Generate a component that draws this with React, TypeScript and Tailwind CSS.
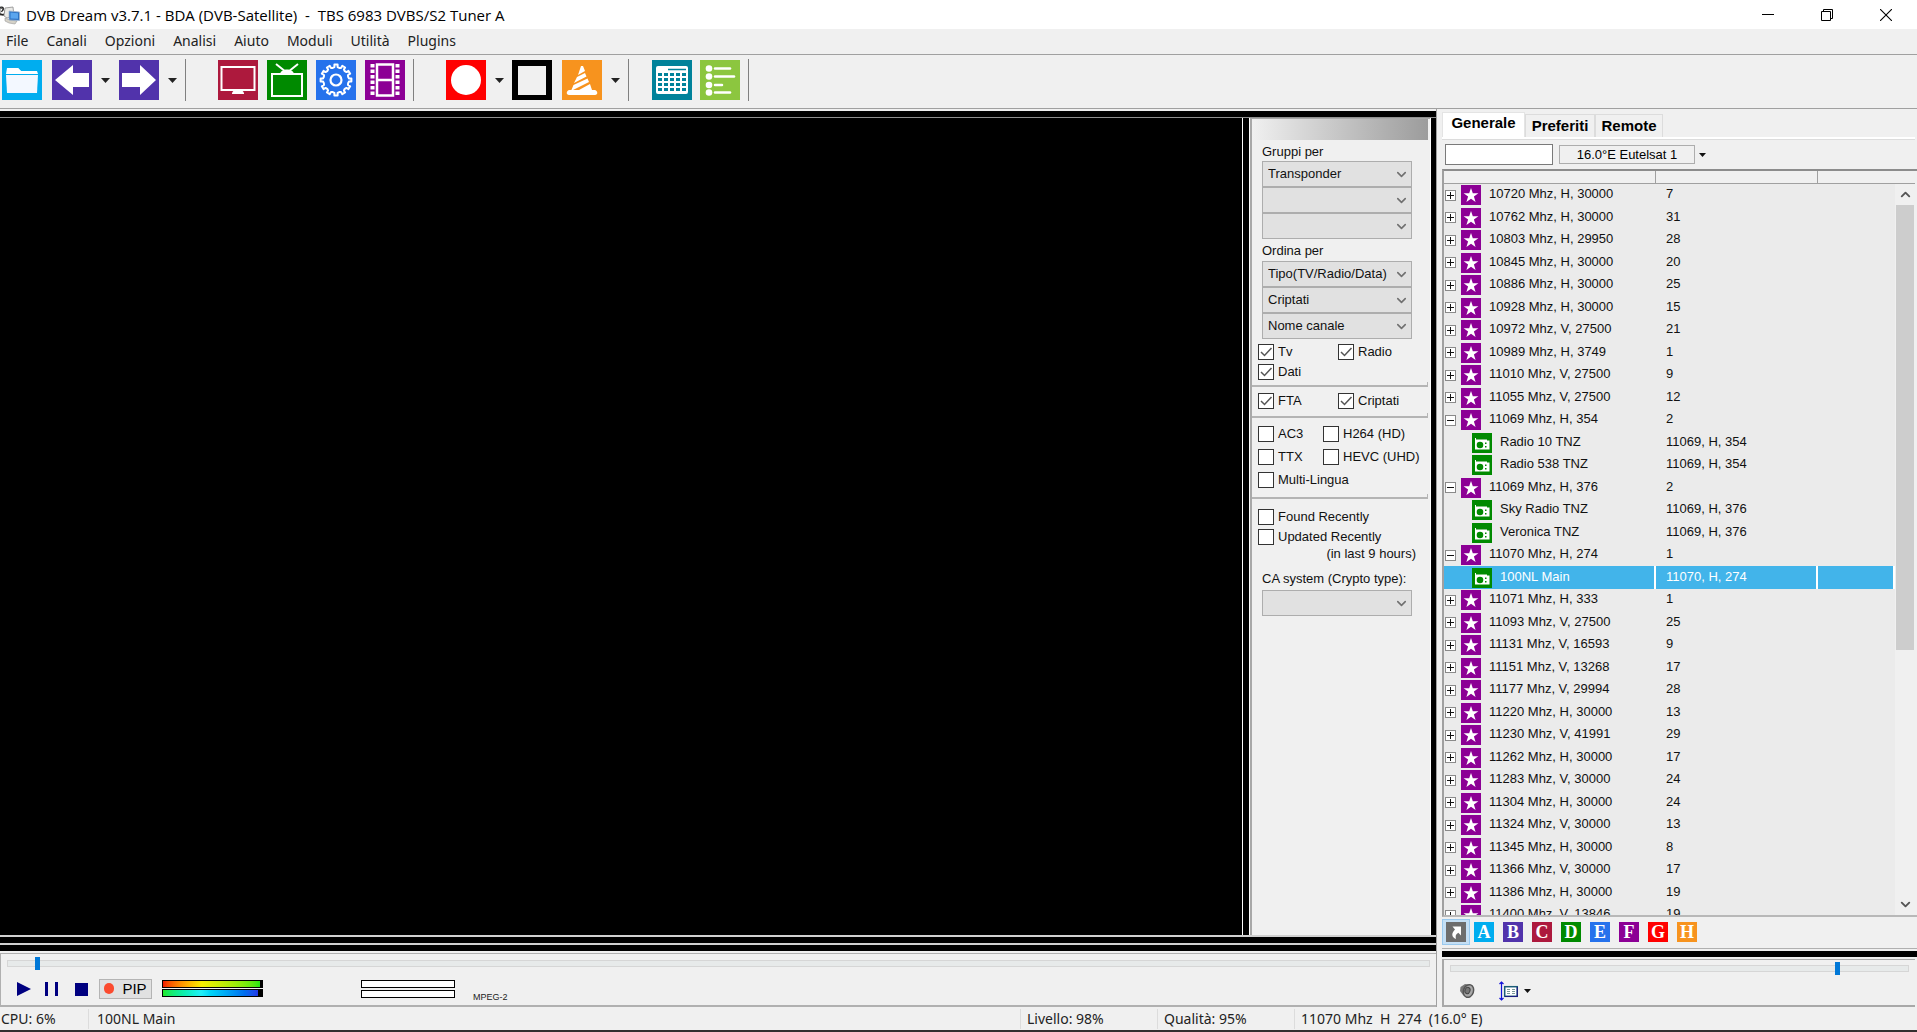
import React from 'react';
import { ChevronDown, ChevronUp } from 'lucide-react';

const sans = "font-['Liberation_Sans',Arial,sans-serif]";

function Caret({ className = '' }: { className?: string }) {
  return (
    <svg viewBox="0 0 9 5" className={'h-[5px] w-[9px] ' + className} aria-hidden="true">
      <path d="M0 0h9L4.500 5z" fill="#222" />
    </svg>
  );
}

function AppIcon() {
  return (
    <svg viewBox="0 0 20 20" className="h-5 w-5" aria-hidden="true">
      <path d="M0 3l3 1 2 3-2 3H0z" fill="#fff" stroke="#444" strokeWidth=".8" />
      <path d="M0 2.500c2-1 4 0 3 2L1.500 7M0 9l4 1" fill="none" stroke="#222" strokeWidth="1.300" />
      <path d="M5 3l8-1 1 9-7 2-3-2z" fill="#e9e9e6" stroke="#8d8d8d" strokeWidth=".8" />
      <path d="M5 13l5 2 7 1-2 3-6-1-4-2z" fill="#d5d2c8" stroke="#999" strokeWidth=".6" />
      <path d="M9 6l10.500 1v8.500L9 15z" fill="#2b72c4" stroke="#9fb4cb" strokeWidth=".8" />
      <path d="M10.500 7.500l7.500.8v5.500l-7.500-.3z" fill="#5aa5ee" />
    </svg>
  );
}

type ToolName = 'folder' | 'back' | 'forward' | 'monitor' | 'tv' | 'gear' | 'film' | 'record' | 'stop' | 'cone' | 'calendar' | 'list';

function gearPath() {
  const teeth = 12;
  let d = '';
  for (let i = 0; i < teeth; i++) {
    const at = (f: number, r: number) => {
      const a = ((i + f) / teeth) * Math.PI * 2;
      return (20 + Math.sin(a) * r).toFixed(1) + ' ' + (20 - Math.cos(a) * r).toFixed(1);
    };
    d += (i ? 'L' : 'M') + at(-0.24, 13) + 'L' + at(-0.2, 15.5) + 'L' + at(0.2, 15.5) + 'L' + at(0.24, 13) + 'L' + at(0.5, 12.5);
  }
  return d + 'Z';
}

const toolArt: Record<ToolName, React.ReactNode> = {
  folder: (
    <g>
      <rect width="40" height="40" fill="#00adef" />
      <path d="M5 8h11l3 3h16v3H5z" fill="#fff" />
      <path d="M4 15h32l-1 18H5z" fill="#f3f8ff" />
      <path d="M4 14l1-6h11l3 3h16l1 3z" fill="#fff" />
    </g>
  ),
  back: (
    <g>
      <rect width="40" height="40" fill="#5133ab" />
      <path d="M3 20L21 5v8h16v14H21v8z" fill="#fff" />
    </g>
  ),
  forward: (
    <g>
      <rect width="40" height="40" fill="#5133ab" />
      <path d="M37 20L21 5v8H3v14h18v8z" fill="#fff" />
    </g>
  ),
  monitor: (
    <g>
      <rect width="40" height="40" fill="#ad193d" />
      <rect x="3.500" y="7" width="33" height="23" fill="none" stroke="#fff" strokeWidth="2" />
      <path d="M14 34c0-6 12-6 12 0z" fill="#fff" />
      <path d="M17 30h6l3 4H14z" fill="#fff" />
    </g>
  ),
  tv: (
    <g>
      <rect width="40" height="40" fill="#008a00" />
      <rect x="5" y="14" width="30" height="22" fill="none" stroke="#fff" strokeWidth="2" />
      <path d="M9 4l10 8M31 4l-10 8" stroke="#fff" strokeWidth="2" />
      <path d="M13 14c1-6 13-6 14 0z" fill="#fff" />
    </g>
  ),
  gear: (
    <g>
      <rect width="40" height="40" fill="#2672ec" />
      <path d={gearPath()} fill="none" stroke="#fff" strokeWidth="2" strokeLinejoin="round" />
      <circle cx="20" cy="20" r="5.500" fill="none" stroke="#fff" strokeWidth="2.200" />
    </g>
  ),
  film: (
    <g>
      <rect width="40" height="40" fill="#8c0095" />
      <path d="M12 4.500h16v31H12zM12 20h16" fill="none" stroke="#fff" strokeWidth="2.500" />
      <path d="M7.500 4v33M32.500 4v33" stroke="#fff" strokeWidth="4" strokeDasharray="3.500 2" />
    </g>
  ),
  record: (
    <g>
      <rect width="40" height="40" fill="#f00" />
      <circle cx="20" cy="20" r="15" fill="#fff" />
    </g>
  ),
  stop: (
    <g>
      <rect width="40" height="40" fill="#000" />
      <rect x="6" y="6" width="28" height="29" fill="#f0f0f0" />
    </g>
  ),
  cone: (
    <g>
      <rect width="40" height="40" fill="#f7931e" />
      <path d="M19 6h2l2 5-7 4zM15 17l8-4 1.500 3.500L12 23zM11.500 25l14-6.500L27 22 9 31zM17 30l11-6 2 6z" fill="#fff" />
      <path d="M7 30h26c3 1 3 5 0 5H7c-3 0-3-4 0-5z" fill="#fff" />
    </g>
  ),
  calendar: (
    <g>
      <rect width="40" height="40" fill="#00829a" />
      <rect x="4" y="6" width="32" height="28" rx="2" fill="#fff" />
      <path d="M16 9.500h18" stroke="#00829a" strokeWidth="1.500" />
      {[13, 18, 23, 28].map((y) => (
        <path key={y} d={`M6 ${y + 1.5}h28`} stroke="#00829a" strokeWidth="3.200" strokeDasharray="4 2" />
      ))}
    </g>
  ),
  list: (
    <g>
      <rect width="40" height="40" fill="#8cc63f" />
      {[[8.5, 30], [16.5, 34], [25, 22], [32.5, 30]].map(([y, x]) => (
        <g key={y}>
          <circle cx="9" cy={y} r="3.300" fill="#fff" />
          <path d={`M15 ${y}H${x}`} stroke="#fff" strokeWidth="2.500" strokeLinecap="round" />
        </g>
      ))}
    </g>
  ),
};

function Tool({ name, label }: { name: ToolName; label: string }) {
  return (
    <button aria-label={label} className="h-10 w-10 shrink-0">
      <svg viewBox="0 0 40 40" className="block h-10 w-10">{toolArt[name]}</svg>
    </button>
  );
}

function DropButton({ label }: { label: string }) {
  return (
    <button aria-label={label} className="flex h-10 w-[26px] items-center justify-center">
      <Caret />
    </button>
  );
}

function Toolbar() {
  return (
    <div className="flex h-[54px] shrink-0 items-center border-b border-[#a0a0a0] pb-[3px] pl-0.5">
      <div className="flex items-center">
        <Tool name="folder" label="Apri" />
        <span className="w-2.5" />
        <Tool name="back" label="Indietro" />
        <DropButton label="Altri canali precedenti" />
        <span className="w-px" />
        <Tool name="forward" label="Avanti" />
        <DropButton label="Altri canali successivi" />
      </div>
      <div className="flex h-[42px] items-center gap-[9px] border-l border-[#808080] pl-8">
        <Tool name="monitor" label="Schermo" />
        <Tool name="tv" label="Televisione" />
        <Tool name="gear" label="Impostazioni" />
        <Tool name="film" label="Registrazioni" />
      </div>
      <div className="ml-2 flex h-[42px] items-center border-l border-[#808080] pl-8">
        <Tool name="record" label="Registra" />
        <DropButton label="Opzioni registrazione" />
        <Tool name="stop" label="Ferma" />
        <span className="w-2.5" />
        <Tool name="cone" label="Streaming" />
        <DropButton label="Opzioni streaming" />
      </div>
      <div className="flex h-[42px] items-center gap-2 border-x border-[#808080] pl-[23px] pr-2">
        <Tool name="calendar" label="Programmazione" />
        <Tool name="list" label="Guida EPG" />
      </div>
    </div>
  );
}

function Combo({ value, label }: { value: string; label: string }) {
  return (
    <div className="relative h-[26px]">
      <select
        aria-label={label}
        defaultValue={value}
        className="h-[26px] w-full appearance-none border border-[#adadad] bg-[#e1e1e1] pl-[5px] pr-6 text-[13px] leading-5 text-[#111]"
      >
        <option>{value}</option>
      </select>
      <ChevronDown size={15} strokeWidth={2.5} className="pointer-events-none absolute right-[3px] top-[6px] text-[#707070]" />
    </div>
  );
}

function Check({ label, on = false }: { label: string; on?: boolean }) {
  return (
    <label className="flex h-5 items-center gap-1 whitespace-nowrap">
      <span className="relative h-4 w-4 shrink-0">
        <input type="checkbox" defaultChecked={on} className="peer block h-4 w-4 appearance-none border border-[#333] bg-white" />
        <svg viewBox="0 0 16 16" className="pointer-events-none absolute inset-0 hidden h-4 w-4 peer-checked:block">
          <path d="M3 8l3.500 3.500L13.500 4" fill="none" stroke="#555" strokeWidth="1.500" />
        </svg>
      </span>
      {label}
    </label>
  );
}

function Rule() {
  return <div className="mr-0.5 h-[5px] shrink-0 border-b-2 border-r border-[#b4b4b4]" />;
}

function FilterPanel() {
  return (
    <div className="flex w-[180px] shrink-0 flex-col border-l-2 border-t border-[#a8a8a8] bg-[#f0f0f0] text-[13px] leading-4 text-[#111]">
      <div className="mr-0.5 h-[21px] shrink-0 bg-linear-to-r from-[#f0f0f0] to-[#9c9c9c]" />
      <div className="ml-[10px] mr-[18px] flex flex-col pt-0.5">
        <div className="flex h-[19px] items-center">Gruppi per</div>
        <div className="flex flex-col">
          <Combo label="Gruppi per, primo" value="Transponder" />
          <Combo label="Gruppi per, secondo" value="" />
          <Combo label="Gruppi per, terzo" value="" />
        </div>
        <div className="flex h-[22px] items-center pt-0.5">Ordina per</div>
        <div className="flex flex-col">
          <Combo label="Ordina per, primo" value="Tipo(TV/Radio/Data)" />
          <Combo label="Ordina per, secondo" value="Criptati" />
          <Combo label="Ordina per, terzo" value="Nome canale" />
        </div>
      </div>
      <div className="grid grid-cols-[80px_1fr] pl-1.5 pt-[3px]">
        <Check label="Tv" on />
        <Check label="Radio" on />
        <Check label="Dati" on />
      </div>
      <Rule />
      <div className="grid grid-cols-[80px_1fr] pb-0.5 pl-1.5 pt-1">
        <Check label="FTA" on />
        <Check label="Criptati" on />
      </div>
      <Rule />
      <div className="grid grid-cols-[65px_1fr] gap-y-[3px] pb-1 pl-1.5 pt-1.5">
        <Check label="AC3" />
        <Check label="H264 (HD)" />
        <Check label="TTX" />
        <Check label="HEVC (UHD)" />
        <Check label="Multi-Lingua" />
      </div>
      <Rule />
      <div className="flex flex-col pl-1.5 pt-2">
        <Check label="Found Recently" />
        <Check label="Updated Recently" />
        <div className="pr-3.5 text-right leading-3.5">(in last 9 hours)</div>
      </div>
      <div className="ml-[10px] mr-[18px] flex flex-col pt-[7px]">
        <div className="flex h-[22px] items-center whitespace-nowrap">CA system (Crypto type):</div>
        <Combo label="CA system" value="" />
      </div>
    </div>
  );
}

function StarIcon() {
  return (
    <svg viewBox="0 0 20 20" className="block h-5 w-5 shrink-0" aria-hidden="true">
      <rect width="20" height="20" fill="#8c0095" />
      <path d="M10 3l1.800 5.300h5.600l-4.500 3.300 1.700 5.400-4.600-3.300L5.400 17l1.700-5.400L2.600 8.300h5.600z" fill="#fff" />
    </svg>
  );
}

function RadioIcon() {
  return (
    <svg viewBox="0 0 20 20" className="block h-5 w-5 shrink-0" aria-hidden="true">
      <rect width="20" height="20" fill="#008a00" />
      <path d="M3 7.500V5h1v1.500h11v1h2.500v9H3z" fill="#fff" />
      <circle cx="8" cy="12" r="3.300" fill="#008a00" />
      <path d="M13 9.500h1.500v1.500H13zM13 13h1.500v1.500H13z" fill="#008a00" />
    </svg>
  );
}

type Row = { name: string; info: string; kind: 'plus' | 'minus' | 'child' | 'selected' };
const g = (name: string, info: string): Row => ({ name, info, kind: 'plus' });

const rows: Row[] = [
  g('10720 Mhz, H, 30000', '7'),
  g('10762 Mhz, H, 30000', '31'),
  g('10803 Mhz, H, 29950', '28'),
  g('10845 Mhz, H, 30000', '20'),
  g('10886 Mhz, H, 30000', '25'),
  g('10928 Mhz, H, 30000', '15'),
  g('10972 Mhz, V, 27500', '21'),
  g('10989 Mhz, H, 3749', '1'),
  g('11010 Mhz, V, 27500', '9'),
  g('11055 Mhz, V, 27500', '12'),
  { name: '11069 Mhz, H, 354', info: '2', kind: 'minus' },
  { name: 'Radio 10 TNZ', info: '11069, H, 354', kind: 'child' },
  { name: 'Radio 538 TNZ', info: '11069, H, 354', kind: 'child' },
  { name: '11069 Mhz, H, 376', info: '2', kind: 'minus' },
  { name: 'Sky Radio TNZ', info: '11069, H, 376', kind: 'child' },
  { name: 'Veronica TNZ', info: '11069, H, 376', kind: 'child' },
  { name: '11070 Mhz, H, 274', info: '1', kind: 'minus' },
  { name: '100NL Main', info: '11070, H, 274', kind: 'selected' },
  g('11071 Mhz, H, 333', '1'),
  g('11093 Mhz, V, 27500', '25'),
  g('11131 Mhz, V, 16593', '9'),
  g('11151 Mhz, V, 13268', '17'),
  g('11177 Mhz, V, 29994', '28'),
  g('11220 Mhz, H, 30000', '13'),
  g('11230 Mhz, V, 41991', '29'),
  g('11262 Mhz, H, 30000', '17'),
  g('11283 Mhz, V, 30000', '24'),
  g('11304 Mhz, H, 30000', '24'),
  g('11324 Mhz, V, 30000', '13'),
  g('11345 Mhz, H, 30000', '8'),
  g('11366 Mhz, V, 30000', '17'),
  g('11386 Mhz, H, 30000', '19'),
  g('11400 Mhz, V, 13846', '19'),
];

function ChannelRow({ row }: { row: Row }) {
  const selected = row.kind === 'selected';
  const child = selected || row.kind === 'child';
  const cell = selected ? 'border-r-2 border-white p-0 bg-[#42b4ea] bg-clip-padding text-white' : 'p-0';
  return (
    <tr className="h-[22px] even:h-[23px]">
      <td className={cell}>
        <div className={child ? 'flex h-5 items-center gap-2 pl-[28px]' : 'flex h-5 items-center gap-2 pl-px'}>
          {!child && (
            <button
              aria-label={row.kind === 'plus' ? 'Espandi' : 'Comprimi'}
              className="mr-[-3px] flex h-[11px] w-[11px] items-center justify-center border border-[#8a8a8a] bg-white"
            >
              <svg viewBox="0 0 7 7" className="h-[7px] w-[7px]">
                <path d={row.kind === 'plus' ? 'M0 3h7v1H0zM3 0h1v7H3z' : 'M0 3h7v1H0z'} fill="#111" />
              </svg>
            </button>
          )}
          {child ? <RadioIcon /> : <StarIcon />}
          <span className="-mt-0.5">{row.name}</span>
        </div>
      </td>
      <td className={cell}>
        <div className="-mt-0.5 pl-2.5">{row.info}</div>
      </td>
      <td className={cell} />
    </tr>
  );
}

const groups = [
  { letter: 'A', color: 'bg-[#00adef]' },
  { letter: 'B', color: 'bg-[#5133ab]' },
  { letter: 'C', color: 'bg-[#ad193d]' },
  { letter: 'D', color: 'bg-[#008a00]' },
  { letter: 'E', color: 'bg-[#2672ec]' },
  { letter: 'F', color: 'bg-[#8c0095]' },
  { letter: 'G', color: 'bg-[#f00]' },
  { letter: 'H', color: 'bg-[#f7931e]' },
];

function ChannelPanel() {
  return (
    <aside className="flex w-[475px] shrink-0 flex-col pt-[3px]">
      <div className="flex h-[25px] shrink-0 items-end text-[15px] font-bold leading-5">
        <button className="h-[25px] w-[83px] border border-b-0 border-[#e4e4e4] bg-white pb-1">Generale</button>
        <button className="h-[23px] w-[70px] border border-b-0 border-[#dcdcdc]">Preferiti</button>
        <button className="h-[23px] w-[68px] border border-b-0 border-[#dcdcdc]">Remote</button>
      </div>
      <div className="mr-0.5 h-[3px] shrink-0 border-b border-[#dcdcdc] bg-white" />
      <div className="flex h-[29px] shrink-0 items-center pl-[3px]">
        <input aria-label="Cerca canale" className="h-[21px] w-[108px] border border-[#7a7a7a] bg-white px-1 text-[13px]" />
        <button className="ml-1.5 h-[19px] w-[136px] whitespace-nowrap border border-[#adadad] text-[13px] leading-4">16.0°E Eutelsat 1</button>
        <button aria-label="Scegli satellite" className="flex h-5 w-[15px] items-center justify-center">
          <svg viewBox="0 0 7 4" className="h-1 w-[7px]"><path d="M0 0h7L3.500 4z" fill="#111" /></svg>
        </button>
      </div>
      <div className="flex min-h-0 flex-1 flex-col border-b-2 border-l-2 border-t-2 border-b-[#b8b8b8] border-l-[#a0a0a0] border-t-[#8c8c8c] pr-0.5">
        <div className="grid h-[13px] shrink-0 grid-cols-[212px_162px_1fr] border-b border-[#a0a0a0]">
          <div className="border-r border-[#a0a0a0]" />
          <div className="border-r border-[#a0a0a0]" />
          <div />
        </div>
        <div className="flex min-h-0 flex-1 bg-[#ebebeb]">
          <div className="min-w-0 flex-1 overflow-hidden">
            <table className="w-full table-fixed border-separate border-spacing-0 text-[13px] leading-4 text-[#111]">
              <colgroup>
                <col className="w-[212px]" />
                <col className="w-[162px]" />
                <col />
              </colgroup>
              <tbody>
                {rows.map((r) => <ChannelRow key={r.name} row={r} />)}
              </tbody>
            </table>
          </div>
          <div className="flex w-[20px] shrink-0 flex-col items-center bg-[#f0f0f0]">
            <button aria-label="Scorri su" className="flex h-[21px] w-full items-center justify-center"><ChevronUp size={15} strokeWidth={3} color="#555" /></button>
            <div className="h-[445px] w-[18px] bg-[#cdcdcd]" />
            <div className="flex-1" />
            <button aria-label="Scorri giù" className="flex h-[21px] w-full items-center justify-center"><ChevronDown size={15} strokeWidth={3} color="#555" /></button>
          </div>
        </div>
      </div>
      <div className="flex h-[32px] shrink-0 items-center gap-[9px] border-b border-[#b0b0b0] pb-px">
        <button aria-label="Collegamento" className="mr-[-5px] flex h-[26px] w-[28px] items-center justify-center border border-[#99c9ee] bg-[#c4dff5]">
          <svg viewBox="0 0 20 20" className="h-5 w-5">
            <rect width="20" height="20" fill="#6d6d6d" />
            <path d="M6.500 4.500H15v9l-2.700-2.700C9.500 12.500 9.500 14 10 17 5.500 15 5 11.500 9 7.500z" fill="#fff" />
          </svg>
        </button>
        {groups.map((x) => (
          <button
            key={x.letter}
            className={"flex h-5 w-5 items-center justify-center font-['Liberation_Serif',serif] text-lg font-bold leading-5 text-white " + x.color}
          >
            {x.letter}
          </button>
        ))}
      </div>
      <div className="mt-0.5 h-[6px] shrink-0 bg-black" />
      <div className="mr-0.5 mt-0.5 flex h-[48px] shrink-0 flex-col border-b-2 border-l-2 border-t border-[#a8a8a8] pt-0.5">
        <Slider label="Volume" value={85} />
        <div className="flex flex-1 items-center pl-3.5 pt-0.5">
          <button aria-label="Muto">
            <svg viewBox="0 0 18 18" className="block h-[18px] w-[18px]">
              <path d="M2.500 5L7 2l6 1-4 13-4-3-3-4z" fill="#777" />
              <ellipse cx="10.500" cy="9" rx="5" ry="6.500" transform="rotate(20 10.500 9)" fill="#a8a8a8" stroke="#555" strokeWidth="1.500" />
              <ellipse cx="9.500" cy="8.500" rx="2.500" ry="3.200" transform="rotate(20 9.500 8.500)" fill="#777" stroke="#444" />
            </svg>
          </button>
          <button aria-label="Proporzioni" className="ml-[22px] flex items-center gap-1.5">
            <svg viewBox="0 0 20 20" className="block h-5 w-5">
              <path d="M3.500 1v18M1.500 3L3.500 1l2 2M1.500 17l2 2 2-2" fill="none" stroke="#1212d8" strokeWidth="1.200" />
              <rect x="6.700" y="5.700" width="12.600" height="9.600" fill="#fff" stroke="#1a5c78" strokeWidth="1.500" />
              <path d="M9 8.500h3M14 8.500h3M9 10.500h3M14 10.500h3M9 12.500h3M14 12.500h3" stroke="#7a9a98" strokeWidth="1" />
              <path d="M7 15.500h12.300V6" fill="none" stroke="#1c1c80" strokeWidth="1.200" />
            </svg>
            <svg viewBox="0 0 7 4" className="h-1 w-[7px]"><path d="M0 0h7L3.500 4z" fill="#111" /></svg>
          </button>
        </div>
      </div>
    </aside>
  );
}

function Slider({ label, value }: { label: string; value: number }) {
  return (
    <input
      type="range"
      aria-label={label}
      defaultValue={value}
      step="0.1"
      className="mx-[6px] block h-[13px] appearance-none bg-transparent [&::-webkit-slider-runnable-track]:h-[7px] [&::-webkit-slider-runnable-track]:border [&::-webkit-slider-runnable-track]:border-[#d6d6d6] [&::-webkit-slider-runnable-track]:bg-[#e7eaea] [&::-webkit-slider-thumb]:-mt-1 [&::-webkit-slider-thumb]:h-[13px] [&::-webkit-slider-thumb]:w-[5px] [&::-webkit-slider-thumb]:appearance-none [&::-webkit-slider-thumb]:bg-[#0078d7]"
    />
  );
}

function Transport() {
  return (
    <div className="flex h-[54px] shrink-0 flex-col border-b-2 border-l border-t border-[#b0b0b0] bg-[#f0f0f0] pt-[3px]">
      <Slider label="Posizione" value={1.9} />
      <div className="flex flex-1 items-center pl-4 pt-0.5">
        <button aria-label="Riproduci" className="w-[27px]"><svg viewBox="0 0 14 14" className="block h-[14px] w-[14px]"><path d="M0 0l14 7-14 7z" fill="#000080" /></svg></button>
        <button aria-label="Pausa" className="w-[30px]"><svg viewBox="0 0 14 14" className="block h-[14px] w-[14px]"><path d="M1 0h3v14H1zM11 0h3v14h-3z" fill="#000080" /></svg></button>
        <button aria-label="Ferma" className="w-[25px]"><svg viewBox="0 0 14 14" className="block h-[14px] w-[14px]"><path d="M1 1h13v13H1z" fill="#000080" /></svg></button>
        <button className="flex h-5 w-[53px] items-center justify-center gap-2 border border-[#b4b4b4] bg-[#e1e1e1] text-[15px] leading-4">
          <span className="h-[11px] w-[10px] rounded-full bg-[#fb4b2f]" />
          PIP
        </button>
        <div className="ml-2.5 flex w-[101px] flex-col gap-px">
          <div className="h-2 border border-r-[3px] border-black bg-linear-to-r from-[#f01000] via-[#f8f000] via-40% to-[#20e810]" />
          <div className="h-2 border border-r-[5px] border-black bg-linear-to-r from-[#20e820] via-[#20f0f8] via-40% to-[#2038e8]" />
        </div>
        <div className="ml-[98px] flex w-[94px] flex-col gap-0.5">
          <div className="h-2 border border-black bg-white" />
          <div className="h-2 border border-black bg-white" />
        </div>
        <span className="ml-[18px] mt-4 text-[9px] leading-3 text-[#222]">MPEG-2</span>
      </div>
    </div>
  );
}

const menus = ['File', 'Canali', 'Opzioni', 'Analisi', 'Aiuto', 'Moduli', 'Utilità', 'Plugins'];

export default function App() {
  return (
    <div className={'flex h-screen flex-col overflow-hidden bg-[#f0f0f0] text-black ' + sans}>
      <header className="flex h-[29px] shrink-0 items-center bg-white font-['Open_Sans','Noto_Sans',sans-serif]">
        <AppIcon />
        <h1 className="ml-1.5 whitespace-pre text-[15px] leading-5">DVB Dream v3.7.1 - BDA (DVB-Satellite)  -  TBS 6983 DVBS/S2 Tuner A</h1>
        <div className="ml-auto flex items-center gap-[47px] pr-[25px]">
          <button aria-label="Riduci a icona"><svg viewBox="0 0 12 12" className="block h-3 w-3"><path d="M0 5h12v1H0z" /></svg></button>
          <button aria-label="Ripristina"><svg viewBox="0 0 12 12" className="block h-3 w-3"><path d="M.5 2.500h9v9h-9zM2.500 2.500v-2h9v9h-2" fill="none" stroke="#000" /></svg></button>
          <button aria-label="Chiudi"><svg viewBox="0 0 12 12" className="block h-3 w-3"><path d="M0 0l12 12M12 0L0 12" fill="none" stroke="#000" strokeWidth="1.100" /></svg></button>
        </div>
      </header>
      <nav className="flex h-[26px] shrink-0 items-center gap-[18px] border-b border-[#a0a0a0] pb-0.5 pl-1.5 font-['Noto_Sans',sans-serif] text-sm leading-5 text-[#222]">
        {menus.map((m) => <button key={m}>{m}</button>)}
      </nav>
      <Toolbar />
      <div className="flex min-h-0 flex-1">
        <main className="mr-[5px] flex min-w-0 flex-1 flex-col border-r border-[#a0a0a0] pt-0.5">
          <div className="h-[7px] shrink-0 border-b border-[#909090] bg-black" />
          <div className="flex min-h-0 flex-1 border-b-2 border-[#d0d0d0] bg-black">
            <div className="min-w-0 flex-1 border-r border-white" />
            <div className="w-[6px]" />
            <div className="flex border-x border-white"><FilterPanel /></div>
            <div className="w-[5px]" />
          </div>
          <div className="h-[6px] shrink-0 bg-black" />
          <div className="h-0.5 shrink-0 bg-[#d0d0d0]" />
          <div className="mb-0.5 h-[6px] shrink-0 bg-black" />
          <Transport />
        </main>
        <ChannelPanel />
      </div>
      <footer className="flex h-[25px] shrink-0 items-center border-b-2 border-[#332f2f] pt-px font-['Noto_Sans',sans-serif] text-sm leading-5 text-[#222]">
        <div className="w-[89px] border-r border-[#dcdcdc] pl-px">CPU: 6%</div>
        <div className="min-w-0 flex-1 border-r border-[#dcdcdc] pl-2">100NL Main</div>
        <div className="w-[137px] border-r border-[#dcdcdc] pl-1.5">Livello: 98%</div>
        <div className="w-[137px] border-r border-[#dcdcdc] pl-1.5">Qualità: 95%</div>
        <div className="w-[622px] whitespace-pre pl-1.5">11070 Mhz  H  274  (16.0° E)</div>
      </footer>
    </div>
  );
}
